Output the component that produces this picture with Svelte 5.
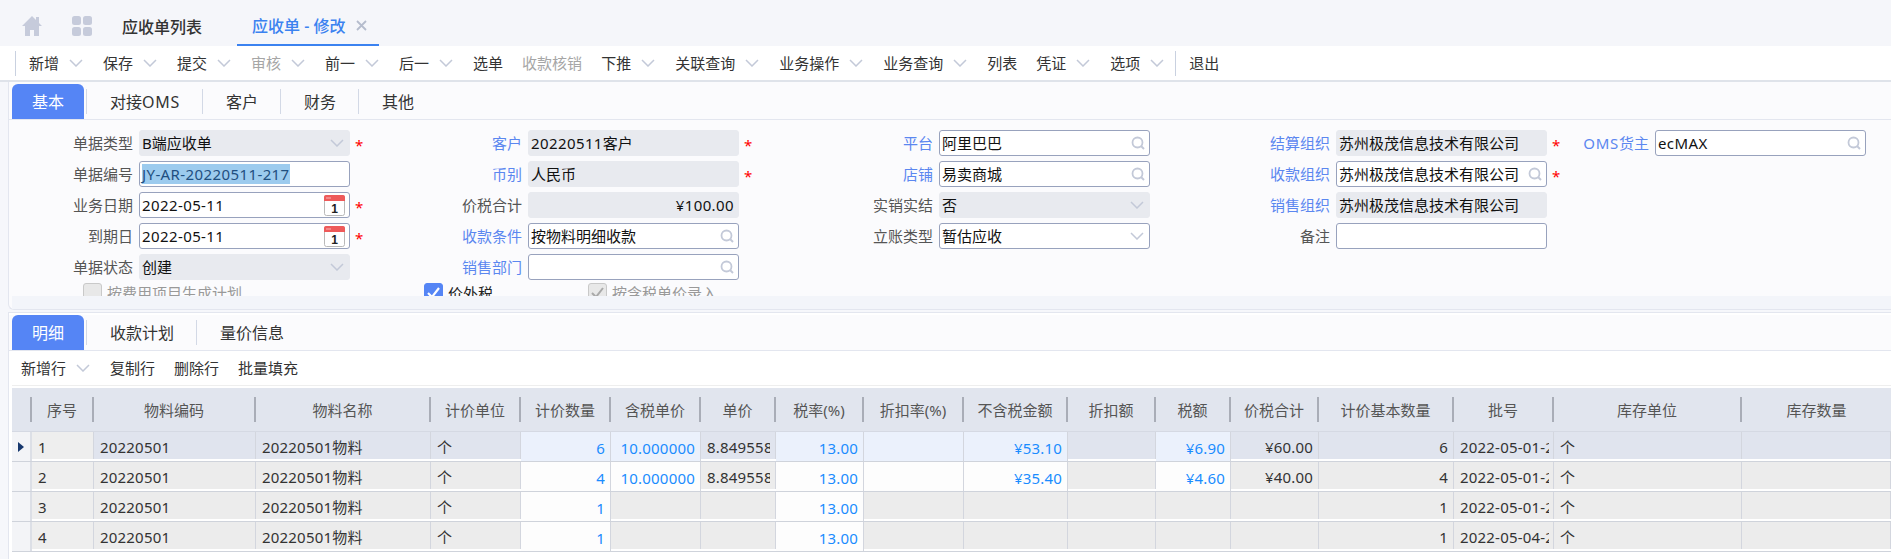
<script>
	const toolbar = [
		{ t: '新增', m: 1 }, { t: '保存', m: 1 }, { t: '提交', m: 1 }, { t: '审核', m: 1, off: 1 },
		{ t: '前一', m: 1 }, { t: '后一', m: 1 }, { t: '选单' }, { t: '收款核销', off: 1 }, { t: '下推', m: 1 },
		{ t: '关联查询', m: 1 }, { t: '业务操作', m: 1 }, { t: '业务查询', m: 1 }, { t: '列表' },
		{ t: '凭证', m: 1 }, { t: '选项', m: 1 }
	];

	const columns = [
		{ t: '' }, { t: '序号', k: 'seq' }, { t: '物料编码' }, { t: '物料名称' }, { t: '计价单位' },
		{ t: '计价数量', r: 1 }, { t: '含税单价', r: 1 }, { t: '单价' }, { t: '税率(%)', r: 1 },
		{ t: '折扣率(%)', r: 1 }, { t: '不含税金额', r: 1 }, { t: '折扣额', r: 1 }, { t: '税额', r: 1 },
		{ t: '价税合计', r: 1 }, { t: '计价基本数量', r: 1 }, { t: '批号', clip: 1 }, { t: '库存单位' }, { t: '库存数量' }
	];

	// 可编辑列（白底蓝字）按行给出
	const rows = [
		{ cur: 1, edit: [5, 6, 8, 9, 10, 12], v: ['', '1', '20220501', '20220501物料', '个', '6', '10.000000', '8.849558', '13.00', '', '¥53.10', '', '¥6.90', '¥60.00', '6', '2022-05-01-2022', '个', ''] },
		{ edit: [5, 6, 8, 9, 10, 12], v: ['', '2', '20220501', '20220501物料', '个', '4', '10.000000', '8.849558', '13.00', '', '¥35.40', '', '¥4.60', '¥40.00', '4', '2022-05-01-2022', '个', ''] },
		{ edit: [5, 8], v: ['', '3', '20220501', '20220501物料', '个', '1', '', '', '13.00', '', '', '', '', '', '1', '2022-05-01-2022', '个', ''] },
		{ edit: [5, 8], v: ['', '4', '20220501', '20220501物料', '个', '1', '', '', '13.00', '', '', '', '', '', '1', '2022-05-04-2022', '个', ''] }
	];
</script>

{#snippet chevron()}
	<svg class="chev" viewBox="0 0 14 8" width="14" height="8"><path d="M1 1l6 6 6-6" fill="none" stroke="#c3c9d8" stroke-width="1.5" /></svg>
{/snippet}

{#snippet search()}
	<svg class="ico" viewBox="0 0 14 14" width="14" height="14"><circle cx="6.5" cy="6.5" r="5" fill="none" stroke="#c3c9d8" stroke-width="1.8" /><path d="M10 10l3 3" stroke="#c3c9d8" stroke-width="2" /></svg>
{/snippet}

{#snippet calendar()}
	<svg class="cal" viewBox="0 0 21 21" width="21" height="21">
		<rect x="0.5" y="0.5" width="20" height="20" rx="2" fill="#fff" stroke="#b9b9b9" />
		<path d="M0 6V2a2 2 0 0 1 2-2h17a2 2 0 0 1 2 2v4z" fill="#ee5a5a" />
		<rect x="2" y="2.5" width="5" height="1" fill="#f7b5b5" />
		<text x="10.5" y="17.5" text-anchor="middle" font-size="12" font-weight="700" font-family="Liberation Sans, sans-serif" fill="#222">1</text>
	</svg>
{/snippet}

<div class="page">
	<header class="top">
		<svg class="home" viewBox="0 0 20 20" width="20" height="20"><path d="M10 0L0 10h3v10h5v-6h4v6h5V10h3l-3-3V1h-3v3z" fill="#c6cbdb" /></svg>
		<svg class="grid-ico" viewBox="0 0 20 20" width="20" height="20">
			<rect width="9" height="9" rx="2.5" fill="#c6cbdb" /><rect x="11" width="9" height="9" rx="2.5" fill="#c6cbdb" />
			<rect y="11" width="9" height="9" rx="2.5" fill="#c6cbdb" /><rect x="11" y="11" width="9" height="9" rx="2.5" fill="#c6cbdb" />
		</svg>
		<span class="top-tab">应收单列表</span>
		<div class="top-tab active">
			<span>应收单 - 修改</span>
			<svg viewBox="0 0 11 11" width="11" height="11"><path d="M1 1l9 9M10 1l-9 9" stroke="#b5bccd" stroke-width="1.8" /></svg>
		</div>
	</header>

	<nav class="bar">
		<i class="sep"></i>
		{#each toolbar as b}
			<div class="btn" class:off={b.off}>
				<span>{b.t}</span>
				{#if b.m}{@render chevron()}{/if}
			</div>
		{/each}
		<i class="sep last"></i>
		<div class="btn exit"><span>退出</span></div>
	</nav>

	<section class="panel first">
		<div class="tabs">
			<span class="tab on">基本</span>
			<span class="tab">对接<u>OMS</u></span>
			<span class="tab">客户</span>
			<span class="tab">财务</span>
			<span class="tab">其他</span>
		</div>

		<div class="form">
			<div class="fields">
				<div class="f"><label>单据类型</label><div class="ctl ro"><b>B端应收单</b>{@render chevron()}</div><em>*</em></div>
				<div class="f"><label class="link">客户</label><div class="ctl ro"><b><u>20220511</u>客户</b></div><em>*</em></div>
				<div class="f"><label class="link">平台</label><div class="ctl"><b>阿里巴巴</b>{@render search()}</div></div>
				<div class="f"><label class="link">结算组织</label><div class="ctl ro"><b>苏州极茂信息技术有限公司</b></div><em>*</em></div>
				<div class="f oms"><label class="link"><u>OMS</u>货主</label><div class="ctl"><b><u>ecMAX</u></b>{@render search()}</div></div>

				<div class="f"><label>单据编号</label><div class="ctl focus"><b><mark><u>JY-AR-20220511-217</u></mark></b></div></div>
				<div class="f"><label class="link">币别</label><div class="ctl ro"><b>人民币</b></div><em>*</em></div>
				<div class="f"><label class="link">店铺</label><div class="ctl"><b>易卖商城</b>{@render search()}</div></div>
				<div class="f"><label class="link">收款组织</label><div class="ctl"><b>苏州极茂信息技术有限公司</b>{@render search()}</div><em>*</em></div>
				<div class="f"></div>

				<div class="f"><label>业务日期</label><div class="ctl"><b><u>2022-05-11</u></b>{@render calendar()}</div><em>*</em></div>
				<div class="f"><label>价税合计</label><div class="ctl ro amt"><b><u>¥100.00</u></b></div></div>
				<div class="f"><label>实销实结</label><div class="ctl ro"><b>否</b>{@render chevron()}</div></div>
				<div class="f"><label class="link">销售组织</label><div class="ctl ro"><b>苏州极茂信息技术有限公司</b></div></div>
				<div class="f"></div>

				<div class="f"><label>到期日</label><div class="ctl"><b><u>2022-05-11</u></b>{@render calendar()}</div><em>*</em></div>
				<div class="f"><label class="link">收款条件</label><div class="ctl"><b>按物料明细收款</b>{@render search()}</div></div>
				<div class="f"><label>立账类型</label><div class="ctl"><b>暂估应收</b>{@render chevron()}</div></div>
				<div class="f"><label>备注</label><div class="ctl"></div></div>
				<div class="f"></div>

				<div class="f"><label>单据状态</label><div class="ctl ro"><b>创建</b>{@render chevron()}</div></div>
				<div class="f"><label class="link">销售部门</label><div class="ctl end">{@render search()}</div></div>
			</div>

			<div class="checks">
				<span class="ck c1"><i class="box"></i><span class="dim">按费用项目生成计划</span></span>
				<span class="ck c2">
					<i class="box checked"><svg viewBox="0 0 19 19" width="19" height="19"><path d="M4 10l4 4 7-9" fill="none" stroke="#fff" stroke-width="2.2" /></svg></i>
					<span>价外税</span>
				</span>
				<span class="ck c3">
					<i class="box"><svg viewBox="0 0 19 19" width="19" height="19"><path d="M4 10l4 4 7-9" fill="none" stroke="#a9a9a9" stroke-width="2" /></svg></i>
					<span class="dim">按含税单价录入</span>
				</span>
			</div>
		</div>
		<div class="strip"></div>
	</section>

	<section class="panel second">
		<div class="tabs">
			<span class="tab on">明细</span>
			<span class="tab">收款计划</span>
			<span class="tab">量价信息</span>
		</div>
		<div class="subbar">
			<div class="btn"><span>新增行</span>{@render chevron()}</div>
			<div class="btn"><span>复制行</span></div>
			<div class="btn"><span>删除行</span></div>
			<div class="btn"><span>批量填充</span></div>
		</div>

		<div class="table">
			<div class="thead">
				{#each columns as c, i}
					<div class="th" class:nosep={i === columns.length - 1}>{c.t}</div>
				{/each}
			</div>
			{#each rows as row}
				<div class="tr" class:cur={row.cur}>
					{#each row.v as val, i}
						<div class="td" class:right={columns[i].r} class:edit={row.edit.includes(i)} class:ind={i === 0} class:seq={i === 1} class:clip={columns[i].clip}>
							{#if i === 0 && row.cur}
								<svg viewBox="0 0 6 10" width="6" height="10"><path d="M0 0l6 5-6 5z" fill="#17386e" /></svg>
							{/if}
							<span>{val}</span>
						</div>
					{/each}
				</div>
			{/each}
		</div>
	</section>
</div>

<style>
	:global(body) {
		background: #f6f7fb;
	}

	.page {
		width: 1891px;
		height: 559px;
		overflow: hidden;
		font-family: "Noto Sans", "Noto Sans CJK SC", sans-serif;
		font-size: 15px;
		color: #222;
	}

	.top {
		display: flex;
		align-items: center;
		height: 46px;
		padding: 6px 0 0 22px;
		box-sizing: border-box;
		background: #f5f6fa;
	}

	.grid-ico {
		margin-left: 30px;
	}

	.top-tab {
		display: flex;
		align-items: center;
		height: 40px;
		font-size: 16px;
		font-weight: 500;
		color: #333;
	}

	.grid-ico + .top-tab {
		margin-left: 30px;
	}

	.top-tab.active {
		margin-left: 35px;
		padding: 0 12px 0 15px;
		gap: 11px;
		box-sizing: border-box;
		color: #3b82f0;
		border-bottom: 2px solid #3b82f0;
	}

	.bar {
		display: flex;
		align-items: center;
		height: 36px;
		padding-left: 15px;
		box-sizing: border-box;
		background: #fff;
		border-bottom: 2px solid #dfe3ea;
		gap: 19px;
	}

	.sep {
		width: 1px;
		height: 25px;
		background: #c9d1e0;
		margin-right: -6px;
	}

	.sep.last {
		margin: 0 -6px 0 -9px;
	}

	.btn {
		display: flex;
		align-items: center;
		gap: 10px;
		color: #333;
		white-space: nowrap;
	}

	.btn span {
		padding-bottom: 2px;
	}

	.btn.off {
		color: #a6a6a6;
	}

	.panel {
		margin-left: 8px;
		border: 1px solid #e3e6ef;
		border-right: 0;
		background: #fbfbfd;
		padding-left: 3px;
	}

	.first {
		height: 228px;
		box-sizing: border-box;
		border-top: 0;
		border-radius: 0 0 0 6px;
		padding-top: 2px;
	}

	.second {
		margin-top: 2px;
		height: 247px;
		box-sizing: border-box;
		padding-top: 2px;
		border-bottom: 0;
		background: #fff;
	}

	.tabs {
		display: flex;
		align-items: center;
		height: 36px;
		margin-left: -3px;
		padding-left: 3px;
		border-bottom: 1px solid #e3e6ef;
		background: #fbfbfd;
		box-sizing: border-box;
		font-size: 16px;
	}

	.tab {
		padding: 0 22px 0 23px;
		height: 25px;
		line-height: 27px;
		border-left: 1px solid #d3d9e6;
		color: #333;
	}

	.tab u,
	label u {
		text-decoration: none;
		letter-spacing: 0.7px;
	}

	.tab.on {
		width: 72px;
		height: 35px;
		line-height: 37px;
		padding: 0;
		margin-right: 2px;
		text-align: center;
		background: #5585f5;
		color: #fff;
		border: 0;
		border-radius: 6px 6px 0 0;
		align-self: flex-start;
	}

	.form {
		height: 176px;
		overflow: hidden;
		padding-top: 10px;
		box-sizing: border-box;
	}

	.fields {
		display: grid;
		grid-template-columns: 389px 411px 397px 319px 1fr;
		grid-auto-rows: 26px;
		row-gap: 5px;
		padding-left: 51px;
		height: 150px;
	}

	.f {
		display: flex;
		align-items: center;
	}

	label {
		width: 70px;
		margin-right: 6px;
		padding-bottom: 2px;
		text-align: right;
		color: #555;
		white-space: nowrap;
	}

	label.link {
		color: #5b87f0;
	}

	.ctl {
		display: flex;
		align-items: center;
		justify-content: space-between;
		width: 211px;
		height: 26px;
		padding: 0 4px 0 2px;
		box-sizing: border-box;
		border: 1px solid #98a2bd;
		border-radius: 3px;
		background: #fff;
	}

	.ctl.end {
		justify-content: flex-end;
	}

	.ctl.ro {
		background: #e8eaef;
		border-color: #e8eaef;
	}

	.ctl.amt {
		justify-content: flex-end;
	}

	.ctl b {
		font-weight: 400;
		color: #111;
		white-space: nowrap;
		padding-bottom: 1px;
	}

	.ctl u {
		text-decoration: none;
		letter-spacing: 0.4px;
	}

	mark {
		background: #9ccbee;
		color: #1f4f80;
	}

	.chev {
		margin-right: 1px;
	}

	.ctl .cal {
		margin: 0 0 0 auto;
	}

	.f em {
		margin-left: 5px;
		padding-top: 4px;
		color: #f00;
		font-style: normal;
		font-size: 15px;
		line-height: 22px;
	}

	.checks {
		display: flex;
		height: 14px;
		margin-top: 3px;
		overflow: hidden;
	}

	.ck {
		display: flex;
		gap: 5px;
		height: 20px;
		align-items: flex-start;
		line-height: 20px;
	}

	.c1 { margin-left: 71px; }
	.c2 { margin-left: 182px; }
	.c3 { margin-left: 95px; }

	.box {
		display: block;
		width: 19px;
		height: 19px;
		border-radius: 3px;
		background: #e8e8e8;
		border: 1px solid #c9c9c9;
		box-sizing: border-box;
	}

	.box svg {
		display: block;
		margin: -1px;
	}

	.box.checked {
		background: #5585f5;
		border-color: #5585f5;
	}

	.dim {
		color: #999;
	}

	.strip {
		height: 13px;
		background: #f3f5fa;
	}

	.subbar {
		display: flex;
		align-items: center;
		gap: 19px;
		height: 35px;
		padding-left: 9px;
		border-bottom: 1px solid #eee;
		background: #fff;
		box-sizing: border-box;
	}

	.table {
		margin-top: 2px;
		color: #333;
	}

	.thead,
	.tr {
		display: grid;
		grid-template-columns: 20px 62px 162px 175px 90px 90px 90px 75px 88px 100px 104px 88px 75px 88px 135px 100px 188px 149px;
	}

	.thead {
		height: 44px;
		background: #e1e5ee;
		border-bottom: 1px solid #d5d9e3;
		box-sizing: border-box;
		align-items: center;
	}

	.th {
		height: 25px;
		line-height: 27px;
		text-align: center;
		color: #555;
		border-right: 2px solid #a9adb7;
		box-sizing: border-box;
		white-space: nowrap;
		overflow: hidden;
	}

	.th.nosep {
		border-right: 0;
	}

	.tr {
		height: 30px;
		background: #fff;
		border-bottom: 1px solid #cfd3db;
		box-sizing: border-box;
	}

	.td {
		display: flex;
		align-items: center;
		height: 27px;
		background: #ececec;
		border-right: 1px solid #d3d6de;
		box-sizing: border-box;
		padding: 2px 5px 0 6px;
		position: relative;
	}

	.td span {
		display: block;
		overflow: hidden;
		white-space: nowrap;
		width: 100%;
		letter-spacing: 0.2px;
	}

	.td.clip {
		padding-right: 4px;
	}

	.td.right span {
		text-align: right;
	}

	.td.edit {
		height: 29px;
		background: #fdfdfd;
		color: #1a8cff;
	}

	.td.ind {
		background: #f3f4f7;
		padding: 0;
		height: 29px;
		border-right: 2px solid #dcdfe6;
		justify-content: center;
	}

	.td.ind span {
		display: none;
	}

	.td.seq {
		background: #eeeeee;
	}

	.tr.cur .td {
		background: #e0e4ee;
	}

	.tr.cur .td.edit {
		background: #ebf1fc;
	}

	.tr.cur .td.seq {
		background: #eeeeee;
	}

	.tr.cur .td.ind {
		background: #f3f4f7;
	}
</style>
